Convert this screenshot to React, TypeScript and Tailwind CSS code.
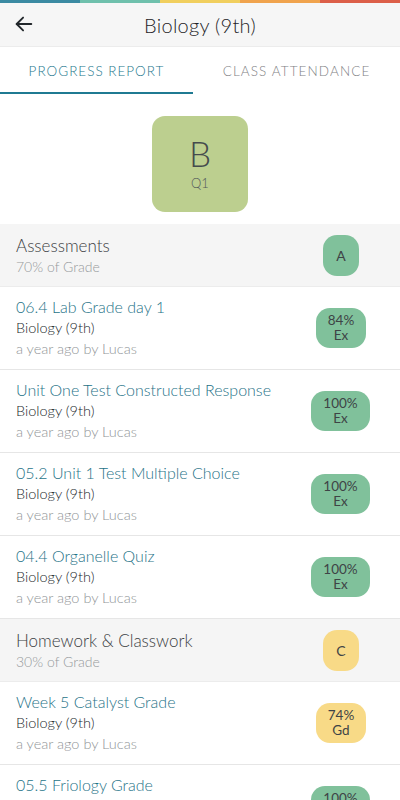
import React from "react";

type Item = { title: string; pct: string; mark: string; tone: "green" | "yellow" };
type Section = { name: string; weight: string; grade: string; tone: "green" | "yellow"; items: Item[] };

const sections: Section[] = [
  {
    name: "Assessments",
    weight: "70% of Grade",
    grade: "A",
    tone: "green",
    items: [
      { title: "06.4 Lab Grade day 1", pct: "84%", mark: "Ex", tone: "green" },
      { title: "Unit One Test Constructed Response", pct: "100%", mark: "Ex", tone: "green" },
      { title: "05.2 Unit 1 Test Multiple Choice", pct: "100%", mark: "Ex", tone: "green" },
      { title: "04.4 Organelle Quiz", pct: "100%", mark: "Ex", tone: "green" },
    ],
  },
  {
    name: "Homework & Classwork",
    weight: "30% of Grade",
    grade: "C",
    tone: "yellow",
    items: [
      { title: "Week 5 Catalyst Grade", pct: "74%", mark: "Gd", tone: "yellow" },
      { title: "05.5 Friology Grade", pct: "100%", mark: "Ex", tone: "green" },
    ],
  },
];

const toneBg = (t: "green" | "yellow") => (t === "green" ? "bg-[#80c19b]" : "bg-[#f8da87]");

export default function App() {
  return (
    <div className="w-[400px] h-[800px] overflow-hidden bg-white font-['Lato',sans-serif] font-light text-[#3d4347]">
      {/* color strip */}
      <div className="flex h-[3px]">
        <div className="flex-1 bg-[#3b8aa2]" />
        <div className="flex-1 bg-[#6fc0ac]" />
        <div className="flex-1 bg-[#f1cf5e]" />
        <div className="flex-1 bg-[#f0a34d]" />
        <div className="flex-1 bg-[#dc5f49]" />
      </div>

      {/* header */}
      <div className="relative flex h-[44px] items-center justify-center bg-[#f6f6f6] border-b border-[#ececec]">
        <button className="absolute left-[13px] top-[10px]">
          <svg width="22" height="22" viewBox="0 0 24 24" fill="none" stroke="#22272b" strokeWidth="2" strokeLinecap="round" strokeLinejoin="round">
            <path d="M20 12H4" />
            <path d="M11 5l-7 7 7 7" />
          </svg>
        </button>
        <h1 className="text-[20px] tracking-[0.3px] text-[#1f2427]">Biology (9th)</h1>
      </div>

      {/* tabs */}
      <div className="flex h-[49px]">
        <div className="relative flex w-[193px] items-center justify-center text-[13.5px] tracking-[1px] text-[#23778d]">
          PROGRESS REPORT
          <div className="absolute bottom-[2px] left-0 right-0 h-[2px] bg-[#1f7a92]" />
        </div>
        <div className="flex flex-1 items-center justify-center text-[13.5px] tracking-[1.1px] text-[#7f8285]">
          CLASS ATTENDANCE
        </div>
      </div>

      {/* overall grade */}
      <div className="flex justify-center pt-[20px] pb-[12px]">
        <div className="flex h-[96px] w-[96px] flex-col items-center justify-center rounded-[13px] bg-[#bccf8f]">
          <span className="text-[35px] leading-[36px] text-[#454b4d]">B</span>
          <span className="mt-[3px] text-[13px] text-[#535a5c]">Q1</span>
        </div>
      </div>

      {sections.map((s) => (
        <div key={s.name}>
          <div className="flex h-[63px] items-center justify-between bg-[#f5f5f5] pl-4 pr-[41px] border-b border-[#ececec]">
            <div>
              <div className="text-[17px] leading-[21px] text-[#3b4043]">{s.name}</div>
              <div className="mt-[2px] text-[14px] leading-[18px] text-[#969a9c]">{s.weight}</div>
            </div>
            <div className={`flex h-[41px] w-[36px] items-center justify-center rounded-[14px] text-[14px] font-normal text-[#3e4446] ${toneBg(s.tone)}`}>
              {s.grade}
            </div>
          </div>
          {s.items.map((it) => (
            <div key={it.title} className="flex h-[83px] items-center justify-between border-b border-[#e6e6e6] pl-4 pr-[30px]">
              <div>
                <div className="text-[16px] leading-[20px] text-[#1f7388]">{it.title}</div>
                <div className="mt-[1px] text-[14.5px] leading-[20px] text-[#22272a]">Biology (9th)</div>
                <div className="mt-[1px] text-[14.5px] leading-[20px] text-[#919597]">a year ago by Lucas</div>
              </div>
              <div
                className={`flex h-[40px] flex-col items-center justify-center rounded-[14px] text-[13.5px] leading-[15px] font-normal text-[#3e4446] ${toneBg(it.tone)} ${it.pct.length > 3 ? "w-[59px]" : "w-[50px]"} ${it.pct.length > 3 ? "mr-0" : "mr-[4px]"}`}
              >
                <span>{it.pct}</span>
                <span>{it.mark}</span>
              </div>
            </div>
          ))}
        </div>
      ))}
    </div>
  );
}
